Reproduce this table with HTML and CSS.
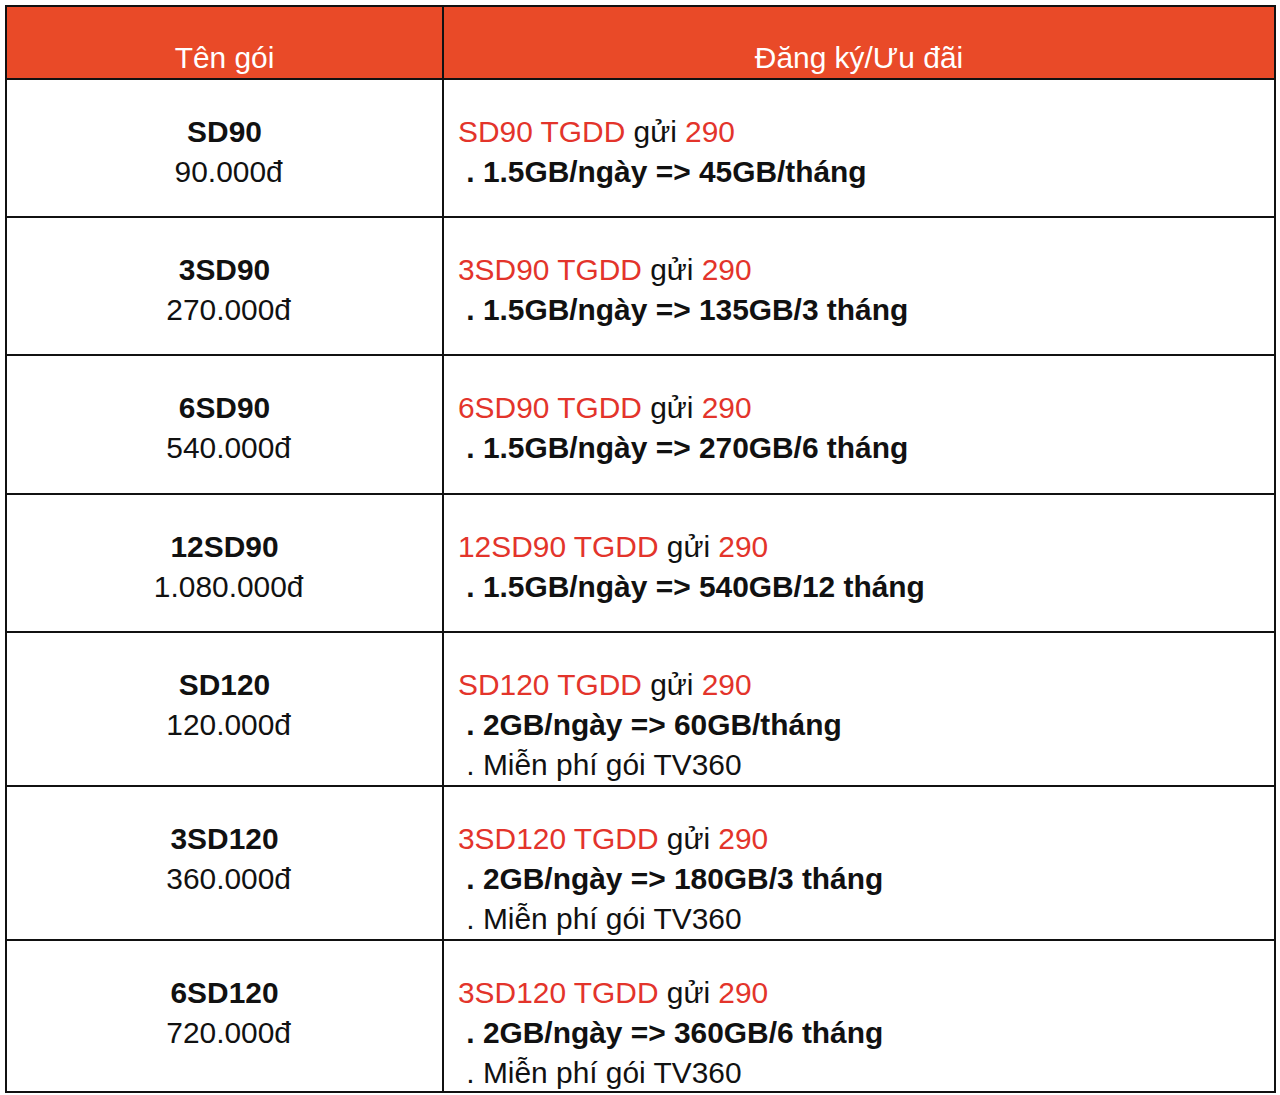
FILE: index.html
```html
<!DOCTYPE html>
<html lang="vi">
<head>
<meta charset="utf-8">
<title>Gói cước SD</title>
<link rel="stylesheet" href="styles.css">
</head>
<body>
<div class="table">
  <div class="cell head">Tên gói</div>
  <div class="cell head">Đăng ký/Ưu đãi</div>

  <div class="cell name r2"><b>SD90</b><br>&nbsp;90.000đ</div>
  <div class="cell info r2"><span class="red">SD90 TGDD</span> gửi <span class="red">290</span><br><b>&nbsp;. 1.5GB/ngày =&gt; 45GB/tháng</b></div>

  <div class="cell name r2"><b>3SD90</b><br>&nbsp;270.000đ</div>
  <div class="cell info r2"><span class="red">3SD90 TGDD</span> gửi <span class="red">290</span><br><b>&nbsp;. 1.5GB/ngày =&gt; 135GB/3 tháng</b></div>

  <div class="cell name r2b"><b>6SD90</b><br>&nbsp;540.000đ</div>
  <div class="cell info r2b"><span class="red">6SD90 TGDD</span> gửi <span class="red">290</span><br><b>&nbsp;. 1.5GB/ngày =&gt; 270GB/6 tháng</b></div>

  <div class="cell name r2"><b>12SD90</b><br>&nbsp;1.080.000đ</div>
  <div class="cell info r2"><span class="red">12SD90 TGDD</span> gửi <span class="red">290</span><br><b>&nbsp;. 1.5GB/ngày =&gt; 540GB/12 tháng</b></div>

  <div class="cell name r3"><b>SD120</b><br>&nbsp;120.000đ</div>
  <div class="cell info r3"><span class="red">SD120 TGDD</span> gửi <span class="red">290</span><br><b>&nbsp;. 2GB/ngày =&gt; 60GB/tháng</b><br>&nbsp;. Miễn phí gói TV360</div>

  <div class="cell name r3"><b>3SD120</b><br>&nbsp;360.000đ</div>
  <div class="cell info r3"><span class="red">3SD120 TGDD</span> gửi <span class="red">290</span><br><b>&nbsp;. 2GB/ngày =&gt; 180GB/3 tháng</b><br>&nbsp;. Miễn phí gói TV360</div>

  <div class="cell name r3c"><b>6SD120</b><br>&nbsp;720.000đ</div>
  <div class="cell info r3c"><span class="red">3SD120 TGDD</span> gửi <span class="red">290</span><br><b>&nbsp;. 2GB/ngày =&gt; 360GB/6 tháng</b><br>&nbsp;. Miễn phí gói TV360</div>
</div>
</body>
</html>
```

FILE: styles.css
```css
html, body {
  margin: 0;
  padding: 0;
  background: #ffffff;
}

body {
  font-family: "Liberation Sans", Arial, sans-serif;
  color: #111111;
  padding: 5px 0 0 5px;
}

.table {
  width: 1271px;
  display: grid;
  grid-template-columns: 437px 832px;
  border-left: 2px solid #111;
  border-top: 2px solid #111;
  box-sizing: border-box;
}

.cell {
  border-right: 2px solid #111;
  border-bottom: 2px solid #111;
  box-sizing: border-box;
  font-size: 29.9px;
  line-height: 40px;
  padding-top: 32px;
  white-space: nowrap;
}

.head {
  background: #e94a28;
  color: #ffffff;
  text-align: center;
  height: 73px;
  padding-top: 31px;
  line-height: 40px;
}

.name {
  text-align: center;
}

.info {
  padding-left: 14px;
}

.r2 { height: 138px; }
.r2b { height: 139px; }
.r3 { height: 154px; }
.r3c { height: 152px; }

.red {
  color: #e3342b;
}

b {
  font-weight: 700;
  color: #111;
}
```
